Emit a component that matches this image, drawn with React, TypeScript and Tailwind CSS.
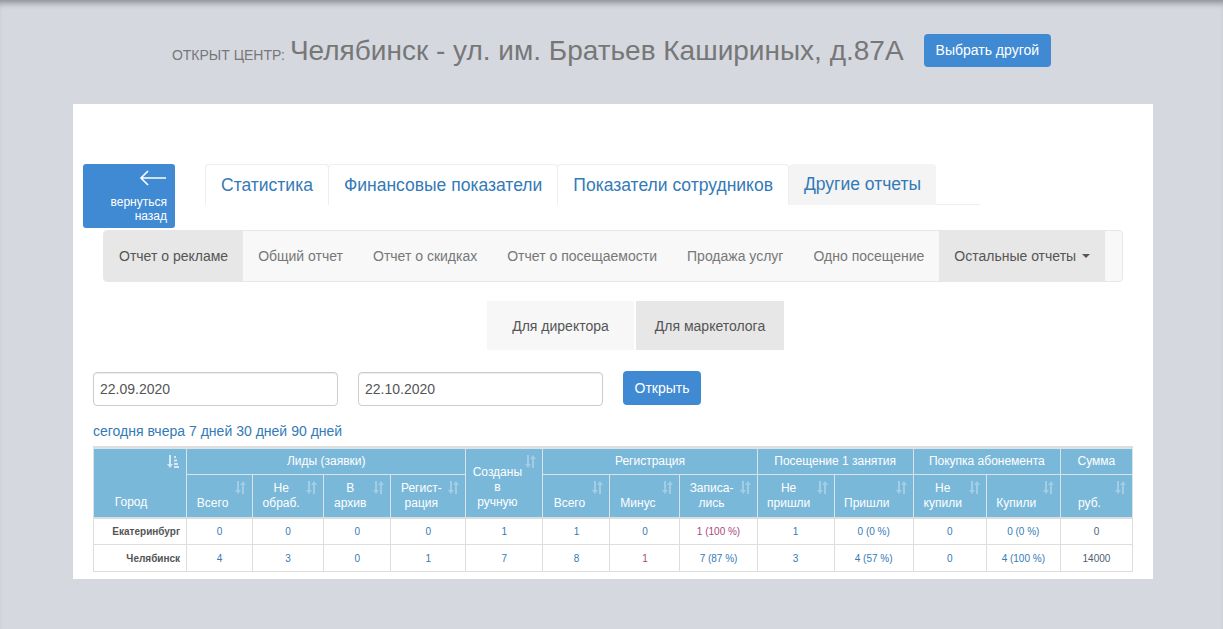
import React from "react";

const colWidths = [93, 66, 71, 67, 75, 77, 67, 70, 77, 77, 79, 73, 74, 72];

const reports = [
  "Общий отчет",
  "Отчет о скидках",
  "Отчет о посещаемости",
  "Продажа услуг",
  "Одно посещение",
];

type Cell = { v: string; pink?: boolean; dark?: boolean };

const rows: { city: string; cells: Cell[] }[] = [
  {
    city: "Екатеринбург",
    cells: [
      { v: "0" }, { v: "0" }, { v: "0" }, { v: "0" }, { v: "1" }, { v: "1" },
      { v: "0" }, { v: "1 (100 %)", pink: true }, { v: "1" }, { v: "0 (0 %)" },
      { v: "0" }, { v: "0 (0 %)" }, { v: "0", dark: true },
    ],
  },
  {
    city: "Челябинск",
    cells: [
      { v: "4" }, { v: "3" }, { v: "0" }, { v: "1" }, { v: "7" }, { v: "8" },
      { v: "1", pink: true }, { v: "7 (87 %)" }, { v: "3" }, { v: "4 (57 %)" },
      { v: "0" }, { v: "4 (100 %)" }, { v: "14000", dark: true },
    ],
  },
];

const SortIcon = () => (
  <svg
    width="11"
    height="13"
    viewBox="0 0 11 13"
    className="absolute right-[6px] top-[6px] opacity-30"
    fill="#fff"
  >
    <path d="M2 0h2v9h2l-3 4-3-4h2z" />
    <path d="M7 13h2V4h2L8 0 5 4h2z" />
  </svg>
);

const SortActive = () => (
  <svg
    width="12"
    height="13"
    viewBox="0 0 12 13"
    className="absolute right-[7px] top-[6px] opacity-70"
    fill="#fff"
  >
    <path d="M2 0h2v9h2l-3 4-3-4h2z" />
    <rect x="7" y="1" width="2" height="2" />
    <rect x="7" y="4.5" width="3" height="2" />
    <rect x="7" y="8" width="4" height="2" />
    <rect x="7" y="11" width="5" height="2" />
  </svg>
);

const Th = ({
  children,
  sort,
  colSpan,
  rowSpan,
  className = "",
}: {
  children: React.ReactNode;
  sort?: boolean;
  colSpan?: number;
  rowSpan?: number;
  className?: string;
}) => (
  <th
    colSpan={colSpan}
    rowSpan={rowSpan}
    className={`relative border border-[#d9e3ea] font-normal text-white text-[12px] leading-[15px] ${
      sort ? "pr-[18px] pl-[4px] align-bottom pb-[6px]" : "px-[4px] align-middle"
    } ${className}`}
  >
    {sort && <SortIcon />}
    {children}
  </th>
);

export default function App() {
  return (
    <div className="min-h-screen w-full bg-[#d5d8df] shadow-[inset_0_7px_6px_-4px_rgba(0,0,0,0.35)] font-['Liberation_Sans',Arial,sans-serif] pb-[50px]">
      {/* header */}
      <div className="flex justify-center pt-[34px] h-[104px] items-start">
        <div className="flex items-baseline gap-[5px] text-[#777] mt-[-1px]">
          <span className="text-[14px] uppercase">Открыт центр:</span>
          <span className="text-[28px] leading-[36px]">
            Челябинск - ул. им. Братьев Кашириных, д.87А
          </span>
        </div>
        <button className="ml-[20px] h-[33px] px-[12px] rounded-[4px] bg-[#3f8ad2] text-white text-[14px]">
          Выбрать другой
        </button>
      </div>

      {/* panel */}
      <div className="ml-[73px] w-[1080px] bg-white pt-[60px] pb-[7px]">
        <div className="flex pl-[10px]">
          <button className="w-[92px] h-[64px] rounded-[3px] bg-[#3f8ad2] text-white flex flex-col items-end pr-[8px] pt-[6px]">
            <svg width="28" height="16" viewBox="0 0 28 16" fill="none" stroke="#fff" strokeWidth="1.6">
              <path d="M27 8H2M9 1L2 8l7 7" />
            </svg>
            <span className="text-[12px] leading-[14px] text-right mt-[9px]">
              вернуться
              <br />
              назад
            </span>
          </button>
          <div className="ml-[30px] w-[775px] h-[41px] flex border-b border-[#eee]">
            {["Статистика", "Финансовые показатели", "Показатели сотрудников"].map((t, i) => (
              <div
                key={t}
                className={`h-[41px] px-[15px] flex items-center border border-b-0 border-[#eee] rounded-t-[4px] text-[17.5px] text-[#337ab7] bg-white ${
                  i > 0 ? "-ml-px" : ""
                }`}
              >
                {t}
              </div>
            ))}
            <div className="h-[41px] px-[15px] flex items-center rounded-t-[4px] text-[17.5px] text-[#337ab7] bg-[#f4f4f4]">
              Другие отчеты
            </div>
          </div>
        </div>

        {/* reports navbar */}
        <div className="ml-[30px] mt-[2px] w-[1020px] h-[52px] bg-[#f8f8f8] border border-[#e7e7e7] rounded-[4px] flex overflow-hidden text-[14px]">
          <div className="px-[15px] flex items-center bg-[#e7e7e7] text-[#555]">Отчет о рекламе</div>
          {reports.map((r) => (
            <div key={r} className="px-[15px] flex items-center text-[#777]">
              {r}
            </div>
          ))}
          <div className="px-[15px] flex items-center bg-[#e7e7e7] text-[#555]">
            Остальные отчеты
            <span className="ml-[6px] inline-block border-x-[4px] border-x-transparent border-t-[4px] border-t-[#555]" />
          </div>
        </div>

        {/* role switch */}
        <div className="flex ml-[414px] mt-[19px] text-[14px] text-[#555]">
          <div className="w-[147px] h-[49px] flex items-center justify-center bg-[#f7f7f7] pt-[2px]">Для директора</div>
          <div className="w-[148px] h-[49px] ml-[2px] flex items-center justify-center bg-[#e7e7e7] pt-[2px]">Для маркетолога</div>
        </div>

        {/* dates */}
        <div className="flex items-center ml-[20px] mt-[22px]">
          <input
            readOnly
            value="22.09.2020"
            className="w-[245px] h-[34px] border border-[#ccc] rounded-[4px] px-[6px] text-[14px] text-[#555] shadow-[inset_0_1px_1px_rgba(0,0,0,0.075)]"
          />
          <input
            readOnly
            value="22.10.2020"
            className="ml-[20px] w-[245px] h-[34px] border border-[#ccc] rounded-[4px] px-[6px] text-[14px] text-[#555] shadow-[inset_0_1px_1px_rgba(0,0,0,0.075)]"
          />
          <button className="ml-[20px] w-[78px] h-[34px] rounded-[4px] bg-[#3f8ad2] text-white text-[14px] -mt-[2px]">
            Открыть
          </button>
        </div>

        <div className="ml-[20px] mt-[15px] text-[14px] leading-[20px] text-[#337ab7] flex gap-[4px]">
          <span>сегодня</span>
          <span>вчера</span>
          <span>7 дней</span>
          <span>30 дней</span>
          <span>90 дней</span>
        </div>

        {/* table */}
        <div className="ml-[20px] mt-[5px] w-[1040px] border-t-2 border-[#ddd]">
          <table className="table-fixed border-collapse w-[1040px] border border-[#ddd]">
            <colgroup>
              {colWidths.map((w, i) => (
                <col key={i} style={{ width: w }} />
              ))}
            </colgroup>
            <thead className="bg-[#7ab8d9]">
              <tr className="h-[26px]">
                <th
                  rowSpan={2}
                  className="relative border border-[#d9e3ea] font-normal text-white text-[12px] align-bottom pb-[6px] pr-[18px]"
                >
                  <SortActive />
                  Город
                </th>
                <Th colSpan={4}>Лиды (заявки)</Th>
                <Th rowSpan={2} sort className="!align-middle !pt-[10px] !pb-0">
                  Созданы
                  <br />в<br />
                  ручную
                </Th>
                <Th colSpan={3}>Регистрация</Th>
                <Th colSpan={2}>Посещение 1 занятия</Th>
                <Th colSpan={2}>Покупка абонемента</Th>
                <Th>Сумма</Th>
              </tr>
              <tr className="h-[43px] border-b-2 border-[#ddd]">
                <Th sort>Всего</Th>
                <Th sort>Не<br />обраб.</Th>
                <Th sort>В<br />архив</Th>
                <Th sort>Регист-<br />рация</Th>
                <Th sort>Всего</Th>
                <Th sort>Минус</Th>
                <Th sort>Записа-<br />лись</Th>
                <Th sort>Не<br />пришли</Th>
                <Th sort>Пришли</Th>
                <Th sort>Не<br />купили</Th>
                <Th sort>Купили</Th>
                <Th sort>руб.</Th>
              </tr>
            </thead>
            <tbody className="text-[10px]">
              {rows.map((r) => (
                <tr key={r.city} className="h-[27px]">
                  <td className="border border-[#ddd] text-right pr-[6px] font-bold text-[#555]">{r.city}</td>
                  {r.cells.map((c, i) => (
                    <td
                      key={i}
                      className={`border border-[#ddd] text-center ${
                        c.pink ? "text-[#a8487e]" : c.dark ? "text-[#4a5f74]" : "text-[#337ab7]"
                      }`}
                    >
                      {c.v}
                    </td>
                  ))}
                </tr>
              ))}
            </tbody>
          </table>
        </div>
      </div>
    </div>
  );
}
